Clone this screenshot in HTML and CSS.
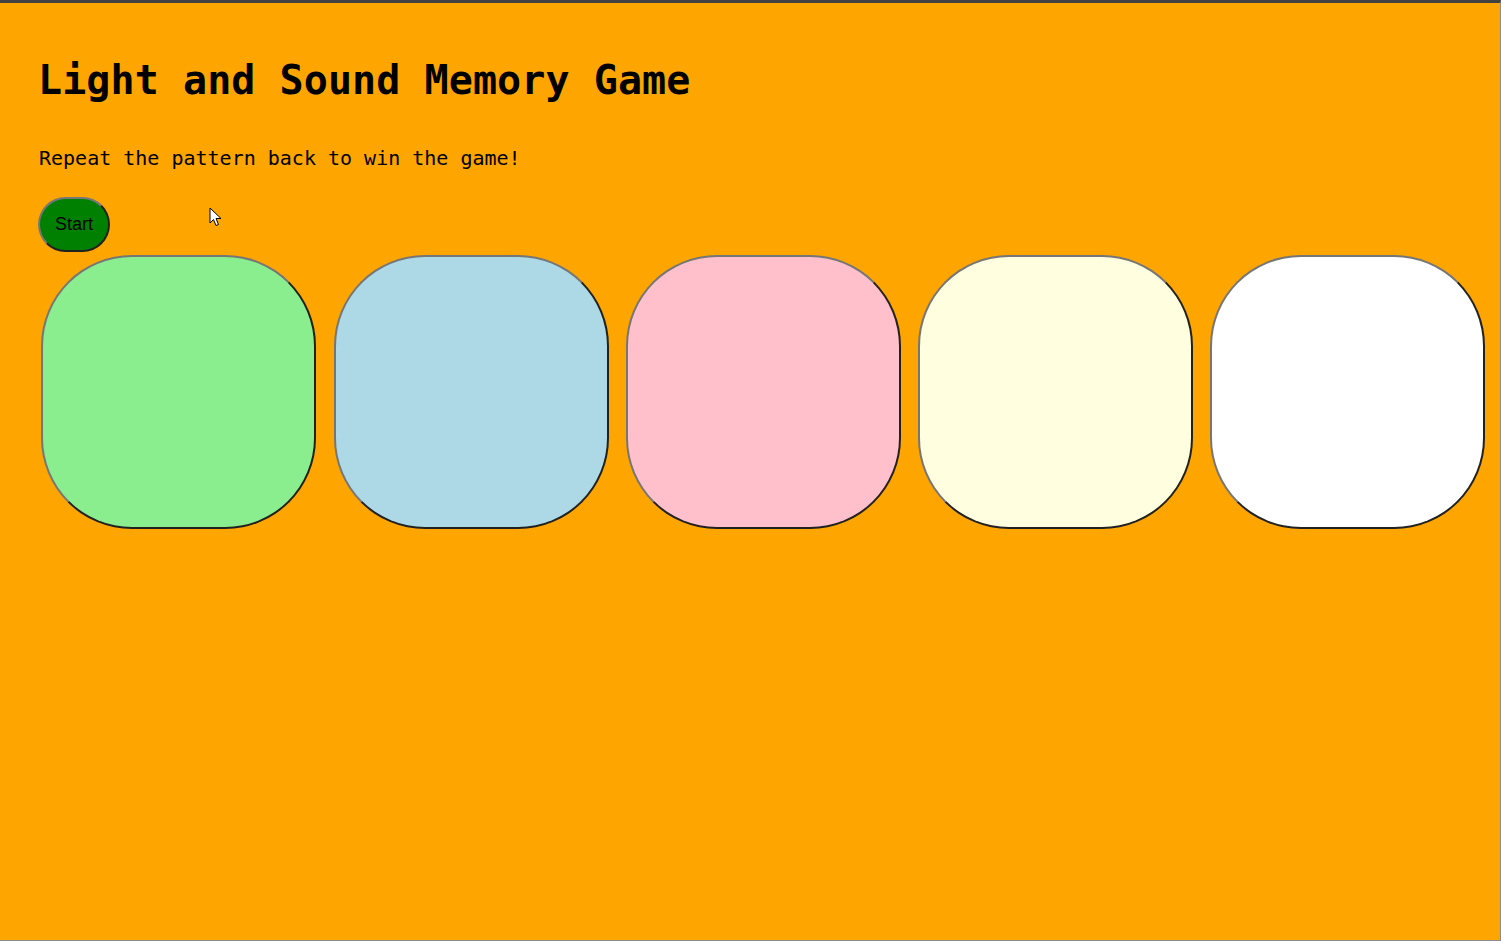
FILE: index.html
```html
<!DOCTYPE html>
<html>
<head>
<meta charset="utf-8">
<title>Light and Sound Memory Game</title>
<link rel="stylesheet" href="styles.css">
</head>
<body>
<div class="frame">
  <h1 class="title">Light and Sound Memory Game</h1>
  <p class="intro">Repeat the pattern back to win the game!</p>
  <div class="controls">
    <button class="start-btn">Start</button>
  </div>
  <div class="game-area">
    <button class="pad pad-green"></button>
    <button class="pad pad-blue"></button>
    <button class="pad pad-pink"></button>
    <button class="pad pad-yellow"></button>
    <button class="pad pad-white"></button>
  </div>
  <svg class="cursor" width="14" height="20" viewBox="0 0 14 20">
    <path d="M1 1 L1 16 L4.5 12.5 L7 18.5 L9.5 17.5 L7 11.5 L12 11.5 Z" fill="#fff" stroke="#000" stroke-width="1" stroke-linejoin="round"/>
  </svg>
</div>
</body>
</html>
```
FILE: styles.css
```css
html, body {
  margin: 0;
  padding: 0;
  background: #ffa500;
}

.frame {
  position: relative;
  box-sizing: border-box;
  height: 941px;
  border-top: 3px solid #424242;
  border-right: 1px solid #8c8c8c;
  border-bottom: 1px solid #8c8c8c;
  padding-left: 38px;
  font-family: "DejaVu Sans Mono", "Liberation Mono", monospace;
  color: #000;
}

.title {
  margin: 53px 0 0;
  font-size: 40px;
  line-height: 48px;
  font-weight: bold;
  letter-spacing: 0.08px;
}

.intro {
  margin: 42px 0 0 1px;
  font-size: 20px;
  line-height: 24px;
}

.controls {
  display: flex;
  margin-top: 27px;
}

.start-btn {
  font-family: "Liberation Sans", Arial, sans-serif;
  font-size: 18px;
  line-height: 21px;
  padding: 15px;
  border: 2px outset #767676;
  border-radius: 28px;
  background: #008000;
  color: #000;
}

.game-area {
  display: flex;
  gap: 17.3px;
  margin-top: 3px;
  padding-left: 3.3px;
}

.pad {
  flex: none;
  width: 275px;
  height: 274px;
  border: 2px outset #767676;
  border-radius: 91px;
  padding: 0;
}

.pad-green { background: #8aee8e; }
.pad-blue { background: #add8e6; }
.pad-pink { background: #ffc0cb; }
.pad-yellow { background: #ffffe0; }
.pad-white { background: #ffffff; }

.cursor {
  position: absolute;
  left: 209px;
  top: 204px;
}
```
